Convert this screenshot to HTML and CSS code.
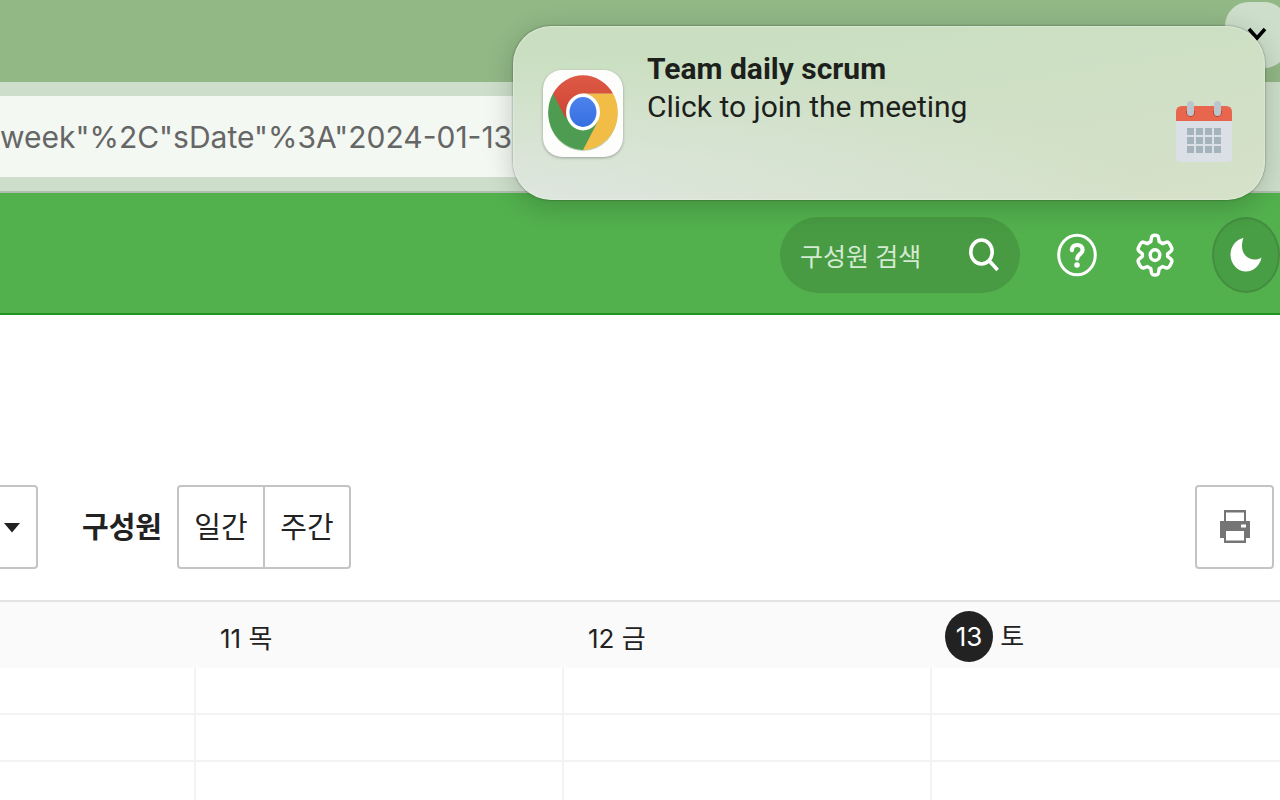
FILE: index.html
```html
<!DOCTYPE html>
<html lang="ko">
<head>
    <meta charset="UTF-8">
    <title>캘린더</title>
    <meta name="viewport" content="width=device-width, initial-scale=1.0">
    <link rel="stylesheet" href="styles.css">
</head>
<body>

<div class="tab-strip">
    <button type="button" class="tab-search" aria-label="탭 검색">
        <svg width="20" height="14" viewBox="0 0 20 14"><path d="M2 2l8 9 8-9" fill="none" stroke="#000" stroke-width="3.500"/></svg>
    </button>
</div>

<div class="browser-bar">
    <input type="text" class="address" aria-label="주소" value='week"%2C"sDate"%3A"2024-01-13'>
</div>

<header class="app-header">
    <div class="search">
        <input type="text" class="search-input" placeholder="구성원 검색" aria-label="구성원 검색">
        <button type="button" class="icon-btn search-btn" aria-label="검색">
            <svg width="30" height="34" viewBox="0 0 30 34" fill="none" stroke="#fff" stroke-width="3.6"><ellipse cx="12.5" cy="14" rx="10.7" ry="12"/><path d="M20 22.5l8.6 9.5"/></svg>
        </button>
    </div>
    <button type="button" class="icon-btn" aria-label="도움말">
        <svg width="40" height="44" viewBox="0 0 40 44" fill="none" stroke="#fff"><ellipse cx="20" cy="22" rx="18.3" ry="19.8" stroke-width="3"/><path d="M14.8 17.2c.3-3.3 2.5-5.2 5.4-5.2 3.3 0 5.4 2 5.4 4.9 0 4.300-5.400 4.400-5.400 8.800" stroke-width="4.200" stroke-linecap="round"/><circle cx="20" cy="32" r="2.800" fill="#fff" stroke="none"/></svg>
    </button>
    <button type="button" class="icon-btn" aria-label="설정">
        <svg width="40" height="44" viewBox="0 0 40 44" fill="none" stroke="#fff" stroke-width="3.400" stroke-linejoin="round"><path d="M16.500 4.500Q16.900 2.200 20 2.200Q23.100 2.200 23.500 4.500L24.200 8.600Q26 9.400 27.500 10.700L31 9.300Q33.200 8.500 34.700 11L36.600 14.800Q37.600 17 35.700 18.400L32.600 20.800V23.400L35.700 25.800Q37.600 27.200 36.600 29.400L34.700 33.200Q33.200 35.700 31 34.900L27.500 33.500Q26 34.800 24.200 35.600L23.500 39.700Q23.100 42 20 42Q16.900 42 16.500 39.700L15.800 35.600Q14 34.800 12.500 33.500L9 34.900Q6.800 35.700 5.300 33.200L3.400 29.400Q2.400 27.200 4.300 25.800L7.400 23.400V20.800L4.300 18.400Q2.400 17 3.400 14.800L5.300 11Q6.800 8.500 9 9.300L12.500 10.700Q14 9.400 15.800 8.600Z"/><ellipse cx="20" cy="22.100" rx="4.800" ry="5.400"/></svg>
    </button>
    <button type="button" class="profile" aria-label="내 프로필">
        <svg width="32" height="36" viewBox="0 0 32 36"><path d="M13.500 1C6 2.500.500 9.500.500 17.500c0 9.500 7 17 15.500 17 7.500 0 14-6 15.500-14-2.500 1.700-5 2.200-7.500 2C17 22 12 16.500 12 9.500c0-3 .400-6 1.500-8.500z" fill="#fff"/></svg>
    </button>
</header>

<main>
    <div class="calendar-tools">
        <div class="select-wrap">
            <select class="view-select" aria-label="보기 선택"><option></option></select>
            <svg class="caret" width="18" height="10" viewBox="0 0 18 10"><path d="M1 0h16l-8 9.500z" fill="#222"/></svg>
        </div>
        <strong class="tools-label" id="memberLabel">구성원</strong>
        <div class="btn-group" role="group" aria-labelledby="memberLabel">
            <button type="button" class="tool-btn">일간</button>
            <button type="button" class="tool-btn">주간</button>
        </div>
        <button type="button" class="tool-btn print-btn" aria-label="인쇄">
            <svg width="30" height="34" viewBox="0 0 30 34"><path d="M4 0h22v11h4v17h-4v5H4v-5H0V11h4z" fill="#757575"/><path d="M6 2.500h18V11H6zM6 21h18v9.500H6zM21 14.500h5v3h-5z" fill="#fff"/></svg>
        </button>
    </div>

    <table class="week">
        <colgroup>
            <col class="col-first">
            <col class="col-day">
            <col class="col-day">
            <col>
        </colgroup>
        <thead>
        <tr>
            <th></th>
            <th>11 목</th>
            <th>12 금</th>
            <th class="today"><span class="today-num">13</span> 토</th>
        </tr>
        </thead>
        <tbody>
        <tr><td></td><td></td><td></td><td></td></tr>
        <tr><td></td><td></td><td></td><td></td></tr>
        <tr><td></td><td></td><td></td><td></td></tr>
        </tbody>
    </table>
</main>

<!-- macOS notification over the page -->
<div class="notification" role="alert">
    <div class="app-icon">
        <svg width="72" height="78" viewBox="0 0 72 78">
            <defs>
                <linearGradient id="blue" x1="0" y1="0" x2="0" y2="1"><stop offset="0" stop-color="#4c82ed"/><stop offset="1" stop-color="#366fe0"/></linearGradient>
                <linearGradient id="red" x1="0" y1="0" x2="0" y2="1"><stop offset="0" stop-color="#df5a45"/><stop offset="1" stop-color="#cc4433"/></linearGradient>
            </defs>
            <ellipse cx="36" cy="40" rx="34.500" ry="37" fill="#3f7d3d" opacity=".35"/>
            <path d="M36 39L6 19.500A35 37.500 0 0 0 36 76z" fill="#4d9c52"/>
            <path d="M36 76A35 37.500 0 0 0 66 19.500H36V39z" fill="#f2bd46"/>
            <path d="M36 76L50.500 48 36 39 18 44 30 60z" fill="#4d9c52"/>
            <path d="M6 19.500A35 37.500 0 0 1 66 19.500H36L18.500 44z" fill="url(#red)"/>
            <ellipse cx="36" cy="38" rx="17" ry="18.500" fill="#fff"/>
            <ellipse cx="36" cy="38" rx="13.500" ry="15" fill="url(#blue)"/>
        </svg>
    </div>
    <div class="notification-text">
        <strong>Team daily scrum</strong>
        <span>Click to join the meeting</span>
    </div>
    <svg class="calendar-icon" width="56" height="62" viewBox="0 0 56 62">
        <path d="M0 19h56v38q0 4-4 4H4q-4 0-4-4z" fill="#dae0e5"/>
        <path d="M6 5h44q6 0 6 6v9H0v-9q0-6 6-6z" fill="#e8664e"/>
        <path d="M10 10v1a4.500 5 0 0 0 9 0v-1M37 10v1a4.500 5 0 0 0 9 0v-1" fill="#b8432f"/>
        <rect x="11" y="0" width="7" height="15" rx="3.500" fill="#bac6ce"/>
        <rect x="38" y="0" width="7" height="15" rx="3.500" fill="#bac6ce"/>
        <path d="M11 27h7v7h-7zM20 27h7v7h-7zM29 27h7v7h-7zM38 27h7v7h-7zM11 36h7v7h-7zM20 36h7v7h-7zM29 36h7v7h-7zM38 36h7v7h-7zM11 45h7v7h-7zM20 45h7v7h-7zM29 45h7v7h-7zM38 45h7v7h-7z" fill="#a5b3bc"/>
    </svg>
</div>

</body>
</html>
```

FILE: styles.css
```css
* {
    box-sizing: border-box;
}

body {
    position: relative;
    margin: 0;
    font-family: Roboto, "Noto Sans CJK KR", sans-serif;
    font-size: 26px;
    color: #222;
    background-color: #fff;
    overflow: hidden;
}

button, input, select {
    font-family: inherit;
    color: inherit;
    margin: 0;
}

/* Browser */
.tab-strip {
    display: flex;
    justify-content: flex-end;
    height: 82px;
    padding-top: 2px;
    background-color: #92b886;
}

.tab-search {
    width: 63px;
    height: 66px;
    margin-right: -8px;
    padding: 0;
    border: none;
    border-radius: 24px;
    background-color: #cddfca;
}

.browser-bar {
    display: flex;
    height: 111px;
    padding: 14px 0;
    background-color: #cddfca;
    border-bottom: 2px solid #b0c0ae;
}

.address {
    width: 50%;
    height: 81px;
    padding: 0;
    border: none;
    background-color: #f3f8f2;
    color: #666;
    font-family: Inter, sans-serif;
    font-size: 30px;
}

/* App header */
.app-header {
    display: flex;
    align-items: center;
    justify-content: flex-end;
    gap: 36px;
    height: 122px;
    padding-top: 4px;
    background-color: #52b14d;
    border-bottom: 2px solid #1e951d;
}

.search {
    display: flex;
    align-items: center;
    width: 240px;
    height: 76px;
    padding: 0 20px;
    border-radius: 38px;
    background-color: #489b43;
}

.search-input {
    flex: 1;
    min-width: 0;
    padding: 4px 0 0;
    border: none;
    background: none;
    font-size: 25px;
}

.search-input::placeholder {
    color: #d5ead3;
}

.icon-btn {
    display: flex;
    justify-content: center;
    width: 42px;
    padding: 0;
    border: none;
    background: none;
}

.search-btn {
    width: 32px;
}

.profile {
    display: flex;
    align-items: center;
    justify-content: center;
    width: 68px;
    height: 76px;
    padding: 0;
    border: 2px solid #448d40;
    border-radius: 50%;
    background-color: #489e44;
}

/* Calendar tools */
.calendar-tools {
    display: flex;
    align-items: center;
    padding: 170px 6px 31px 0;
}

.select-wrap {
    display: grid;
    align-items: center;
    width: 38px;
    height: 84px;
    margin-right: 44px;
}

.view-select, .caret {
    grid-area: 1 / 1;
}

.view-select {
    appearance: none;
    width: 38px;
    height: 84px;
    border: 2px solid #c4c4c4;
    border-left: none;
    border-radius: 0 4px 4px 0;
    background-color: #fff;
}

.caret {
    margin: 2px 0 0 3px;
    pointer-events: none;
}

.tools-label {
    margin-right: 15px;
    padding-bottom: 4px;
    font-size: 29px;
}

.btn-group {
    display: flex;
    margin-right: auto;
}

.tool-btn {
    width: 88px;
    height: 84px;
    padding: 0 0 4px;
    border: 2px solid #c4c4c4;
    border-radius: 4px;
    background-color: #fff;
    font-size: 29px;
}

.btn-group .tool-btn:first-child {
    border-radius: 4px 0 0 4px;
}

.btn-group .tool-btn:last-child {
    margin-left: -2px;
    border-radius: 0 4px 4px 0;
}

.print-btn {
    display: flex;
    align-items: center;
    justify-content: center;
    width: 79px;
    padding: 0;
}

/* Week table */
.week {
    width: 100%;
    table-layout: fixed;
    border-collapse: separate;
    border-spacing: 0;
}

.col-first {
    width: 196px;
}

.col-day {
    width: 368px;
}

.week th {
    height: 68px;
    padding: 2px 0 0 24px;
    border-top: 2px solid #e3e3e3;
    background-color: #fafafa;
    font-family: Inter, "Noto Sans CJK KR", sans-serif;
    font-size: 26px;
    font-weight: 400;
    text-align: left;
}

.week td {
    height: 47px;
    padding: 0;
    border-right: 2px solid #f3f3f3;
    border-bottom: 2px solid #f3f3f3;
}

.week td:last-child {
    border-right: none;
}

.week .today {
    padding-left: 13px;
}

.today-num {
    display: inline-block;
    width: 48px;
    height: 51px;
    border-radius: 50%;
    background-color: #222;
    color: #fff;
    line-height: 51px;
    text-align: center;
}

/* Notification */
.notification {
    position: absolute;
    top: 26px;
    right: 15px;
    display: flex;
    align-items: center;
    width: 752px;
    height: 174px;
    padding: 0 33px 0 30px;
    border-radius: 38px;
    background: radial-gradient(ellipse at 0% 100%, #dee6de 0%, rgba(222, 230, 222, 0) 60%), linear-gradient(170deg, #cadfc1 20%, #d6e1ca 100%);
    box-shadow: 0 0 2px rgba(0, 0, 0, 0.5), 0 6px 28px rgba(0, 0, 0, 0.2), inset 0 0 2px rgba(255, 255, 255, 0.8);
    color: #1c1f1c;
}

.app-icon {
    display: flex;
    align-items: center;
    justify-content: center;
    width: 80px;
    height: 87px;
    margin-right: 24px;
    border-radius: 19px;
    background-color: #fdfdfc;
    box-shadow: 0 1px 3px rgba(0, 0, 0, 0.3);
}

.notification-text {
    display: flex;
    flex-direction: column;
    align-self: flex-start;
    margin-right: auto;
    padding-top: 24px;
    font-size: 30px;
    line-height: 38px;
}

.calendar-icon {
    margin-top: 38px;
}
```
